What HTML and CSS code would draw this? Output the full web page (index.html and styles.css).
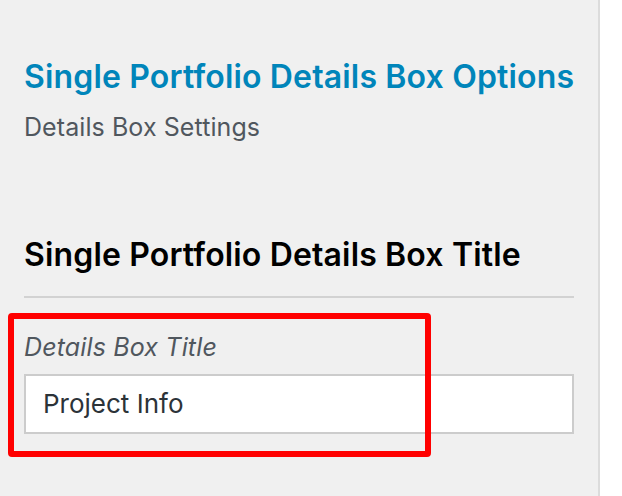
FILE: index.html
```html
<!DOCTYPE html>
<html>
<head>
<meta charset="utf-8">
<link rel="stylesheet" href="styles.css">
</head>
<body>
<div class="wrap">
  <div class="panel">
    <h2 class="section-title">Single Portfolio Details Box Options</h2>
    <p class="section-sub">Details Box Settings</p>
    <h3 class="field-heading">Single Portfolio Details Box Title</h3>
    <div class="divider"></div>
    <div class="field">
      <label class="field-label">Details Box Title</label>
      <div class="input">Project Info</div>
      <div class="highlight"></div>
    </div>
  </div>
  <div class="rest"></div>
</div>
</body>
</html>
```
FILE: styles.css
```css
html, body {
  margin: 0;
  padding: 0;
  height: 100%;
  background: #ffffff;
  font-family: Inter, "Noto Sans", sans-serif;
}
.wrap {
  display: flex;
  height: 496px;
}
.panel {
  width: 600px;
  box-sizing: border-box;
  background: #f0f0f0;
  border-right: 2px solid #dcdcdc;
  padding: 57px 24px 0 24px;
  flex: none;
}
.rest {
  flex: 1;
  background: #fff;
}
.section-title {
  margin: 0;
  font-size: 32px;
  line-height: 40px;
  font-weight: 600;
  letter-spacing: 0.16px;
  color: #0085ba;
  white-space: nowrap;
}
.section-sub {
  margin: 14px 0 0 0;
  font-size: 25px;
  line-height: 32px;
  letter-spacing: 0.08px;
  color: #50575e;
}
.field-heading {
  margin: 92px 0 0 0;
  font-size: 32px;
  line-height: 40px;
  font-weight: 600;
  letter-spacing: 0.15px;
  color: #000;
  white-space: nowrap;
}
.divider {
  margin-top: 21px;
  height: 2px;
  background: #d2d2d2;
}
.field {
  position: relative;
  padding-top: 33px;
}
.field-label {
  display: block;
  font-size: 25px;
  line-height: 32px;
  font-style: italic;
  letter-spacing: 0.15px;
  color: #50575e;
}
.input {
  margin-top: 11px;
  height: 60px;
  box-sizing: border-box;
  background: #fff;
  border: 2px solid #cccccc;
  padding-left: 17px;
  font-size: 26px;
  line-height: 56px;
  color: #2c3338;
}
.highlight {
  position: absolute;
  left: -16px;
  top: 15px;
  width: 423px;
  height: 144px;
  box-sizing: border-box;
  border: 6px solid #ff0000;
  border-radius: 4px;
}
```
